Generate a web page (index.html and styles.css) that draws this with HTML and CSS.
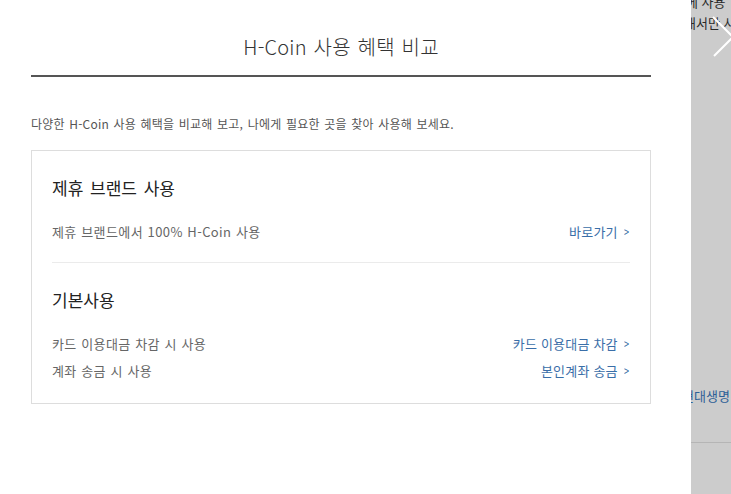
FILE: index.html
```html
<!DOCTYPE html>
<html lang="ko">
<head>
<meta charset="utf-8">
<link rel="stylesheet" href="styles.css">
</head>
<body>
<div class="page">
  <div class="popup">
    <h1 class="title">H-Coin 사용 혜택 비교</h1>
    <p class="desc">다양한 H-Coin 사용 혜택을 비교해 보고, 나에게 필요한 곳을 찾아 사용해 보세요.</p>
    <div class="box">
      <div class="section">
        <h2 class="sec-title">제휴 브랜드 사용</h2>
        <div class="rows">
          <div class="row"><span class="label">제휴 브랜드에서 100% H-Coin 사용</span><a class="link">바로가기 <span class="chev">&gt;</span></a></div>
        </div>
      </div>
      <div class="section last">
        <h2 class="sec-title">기본사용</h2>
        <div class="rows">
          <div class="row"><span class="label">카드 이용대금 차감 시 사용</span><a class="link">카드 이용대금 차감 <span class="chev">&gt;</span></a></div>
          <div class="row"><span class="label">계좌 송금 시 사용</span><a class="link">본인계좌 송금 <span class="chev">&gt;</span></a></div>
        </div>
      </div>
    </div>
  </div>
  <div class="dim">
    <span class="bg-text t1">에 사용</span>
    <span class="bg-text t2">해서만 사용</span>
    <span class="bg-text t3">현대생명</span>
    <div class="bg-line"></div>
    <svg class="close" width="26" height="44" viewBox="0 0 26 44"><path d="M7 2 L27 22 M27 22 L8 41" stroke="#fff" stroke-width="2" fill="none"/></svg>
  </div>
</div>
</body>
</html>
```
FILE: styles.css
```css
* { box-sizing: border-box; }
html, body { margin: 0; padding: 0; }
body {
  font-family: "Noto Sans CJK KR", "Noto Sans", sans-serif;
  background: #fff;
  width: 731px;
  height: 494px;
  overflow: hidden;
}
.page {
  display: flex;
  height: 494px;
}
.popup {
  width: 691px;
  flex: none;
  padding: 32px 40px 0 31px;
  background: #fff;
}
.title {
  margin: 0;
  font-size: 20px;
  font-weight: 300;
  line-height: 30px;
  color: #333;
  text-align: center;
  letter-spacing: 0.2px;
  word-spacing: 1px;
  padding-bottom: 13px;
  border-bottom: 2px solid #555;
}
.desc {
  margin: 38px 0 17px;
  font-size: 12px;
  line-height: 18px;
  color: #555;
  letter-spacing: 0.2px;
  word-spacing: 1px;
}
.box {
  border: 1px solid #ddd;
  padding: 0 20px;
}
.section {
  padding: 25px 0 20px;
  border-bottom: 1px solid #ebebeb;
}
.section.last {
  border-bottom: none;
  padding-bottom: 22px;
}
.sec-title {
  margin: 0;
  font-size: 17px;
  font-weight: 400;
  line-height: 24px;
  color: #222;
  word-spacing: 2px;
}
.rows {
  margin-top: 22px;
  display: flex;
  flex-direction: column;
  gap: 7px;
}
.row {
  display: flex;
  justify-content: space-between;
  align-items: center;
  font-size: 13px;
  line-height: 20px;
  letter-spacing: 0.4px;
  word-spacing: 0.5px;
}
.label { color: #666; }
.link { color: #3a6ea8; text-decoration: none; letter-spacing: 0.2px; word-spacing: 0; }
.chev { display: inline-block; transform: scaleX(0.7); margin-left: 1px; }
.dim {
  flex: 1;
  position: relative;
  background: #cccccc;
  overflow: hidden;
}
.bg-text {
  position: absolute;
  white-space: nowrap;
  font-size: 13px;
  line-height: 19px;
  color: #2a2a2a;
}
.t1 { left: -5px; top: -8px; }
.t2 { left: -7px; top: 13px; }
.t3 { left: -9px; top: 386px; color: #2d5f97; }
.bg-line {
  position: absolute;
  left: 0; right: 0;
  top: 442px;
  height: 1px;
  background: #b5b5b5;
}
.close {
  position: absolute;
  left: 15px;
  top: 15px;
}
```
